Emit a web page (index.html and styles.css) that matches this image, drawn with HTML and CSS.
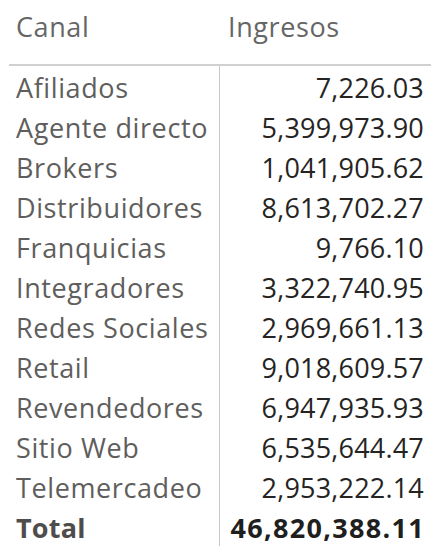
FILE: index.html
```html
<!DOCTYPE html>
<html lang="es">
<head>
<meta charset="utf-8">
<link rel="stylesheet" href="styles.css">
</head>
<body>
<div class="table">
  <div class="head">
    <div class="hcell">Canal</div>
    <div class="hcell hnum">Ingresos</div>
  </div>
  <div class="body">
    <div class="cat">Afiliados</div><div class="num">7,226.03</div>
    <div class="cat">Agente directo</div><div class="num">5,399,973.90</div>
    <div class="cat">Brokers</div><div class="num">1,041,905.62</div>
    <div class="cat">Distribuidores</div><div class="num">8,613,702.27</div>
    <div class="cat">Franquicias</div><div class="num">9,766.10</div>
    <div class="cat">Integradores</div><div class="num">3,322,740.95</div>
    <div class="cat">Redes Sociales</div><div class="num">2,969,661.13</div>
    <div class="cat">Retail</div><div class="num">9,018,609.57</div>
    <div class="cat">Revendedores</div><div class="num">6,947,935.93</div>
    <div class="cat">Sitio Web</div><div class="num">6,535,644.47</div>
    <div class="cat">Telemercadeo</div><div class="num">2,953,222.14</div>
    <div class="cat total">Total</div><div class="num total">46,820,388.11</div>
  </div>
</div>
</body>
</html>
```

FILE: styles.css
```css
html, body {
  margin: 0;
  padding: 0;
  background: #ffffff;
}
body {
  font-family: "Open Sans", "Noto Sans", sans-serif;
  font-size: 27px;
}
.table {
  margin-left: 9px;
  width: 422px;
}
.head {
  display: grid;
  grid-template-columns: 210px 212px;
  height: 64px;
  border-bottom: 2px solid #d0d0d0;
  color: #666666;
}
.hcell {
  padding: 7px 0 0 7px;
  line-height: 40px;
  letter-spacing: 0.6px;
}
.hnum {
  padding-left: 9px;
}
.body {
  display: grid;
  grid-template-columns: 210px 212px;
  grid-auto-rows: 40px;
}
.cat {
  color: #605e5c;
  padding: 2px 0 0 7px;
  line-height: 40px;
  white-space: nowrap;
  letter-spacing: 0.6px;
}
.num {
  color: #252423;
  text-align: right;
  padding: 2px 7px 0 0;
  border-left: 1px solid #c8c8c8;
  line-height: 40px;
  white-space: nowrap;
  letter-spacing: 0.2px;
}
.total {
  font-weight: 700;
}
.cat.total {
  color: #4f4d4b;
  letter-spacing: 0.2px;
}
.num.total {
  color: #201f1e;
  letter-spacing: 1.3px;
  padding-right: 6px;
}
```
